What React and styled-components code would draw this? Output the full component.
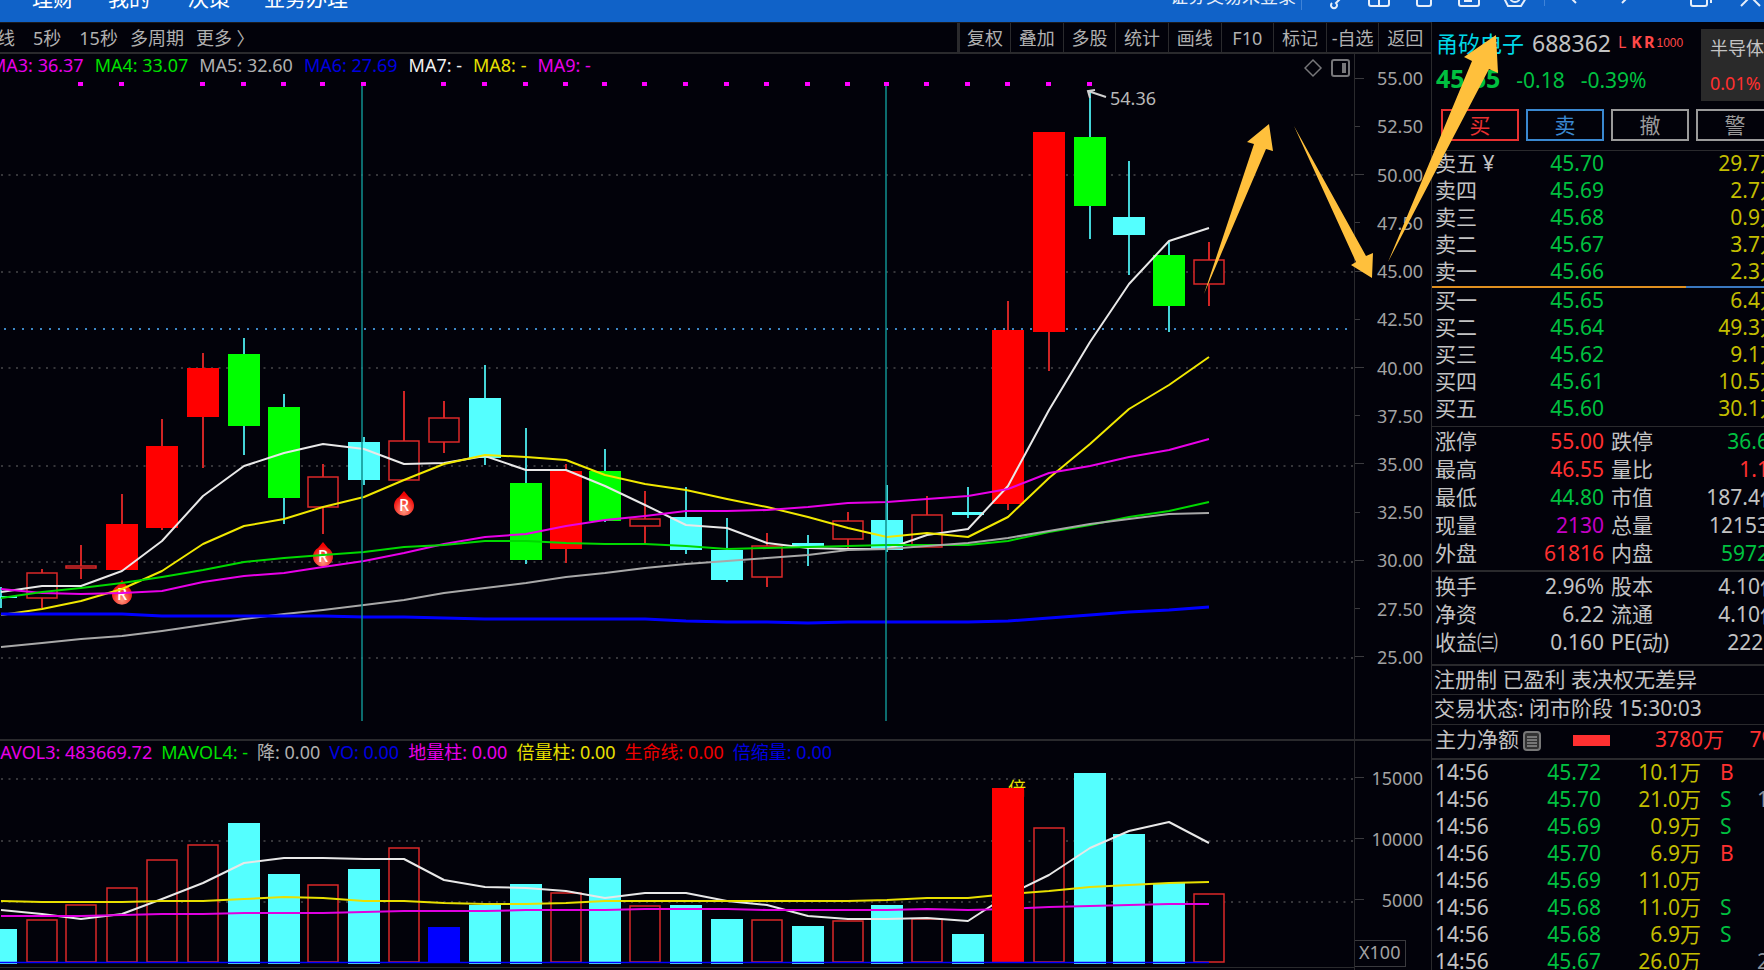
import React from "react";
import styled, { createGlobalStyle } from "styled-components";

const GlobalStyle = createGlobalStyle`
  * { box-sizing: border-box; }

  body {
    margin: 0;
    background: #02020a;
    overflow: hidden;
  }

  button {
    padding: 0;
    border: none;
    background: none;
    font: inherit;
    color: inherit;
    cursor: pointer;
  }
`;

const colors = {
  line: "#2a2a2d",
  text: "#c3c3c3",
  axis: "#a3a3a3",
  red: "#ff3030",
  green: "#00c040",
  yellow: "#c3bd00",
  purple: "#c400c4",
  muted: "#8a8f98",
};

const Page = styled.div`
  position: relative;
  display: flex;
  flex-direction: column;
  height: 100vh;
  overflow: hidden;
  color: ${colors.text};
  font-family: "Noto Sans", "Noto Sans CJK SC", sans-serif;
  font-size: 18px;
  line-height: 24px;
`;

/* Title bar */

const TitleBar = styled.header`
  display: flex;
  align-items: flex-end;
  justify-content: space-between;
  flex: none;
  height: 22px;
  padding: 0 2px 12px 32px;
  background: #1062c8;
  color: #fff;
`;

const Menu = styled.nav`
  display: flex;
  gap: 34px;
  font-size: 21px;
`;

const MenuLink = styled.a`
  color: inherit;
  text-decoration: none;
  white-space: nowrap;
  margin-right: ${(p) => (p.$wide ? "4px" : "0")};
`;

const Tools = styled.div`
  display: flex;
  align-items: flex-end;
  color: #e6eefa;
`;

const Login = styled.button`
  width: 132px;
  height: 28px;
  line-height: 28px;
  text-align: left;
  border-right: 1px solid #3f83d8;
`;

const ToolIcons = styled.svg`
  flex: none;
  width: 460px;
  height: 24px;
  fill: none;
  stroke: currentColor;
  stroke-width: 2;
`;

/* Main area */

const Body = styled.div`
  display: flex;
  flex: 1;
  min-height: 0;
`;

const Main = styled.main`
  display: flex;
  flex-direction: column;
  flex: 1;
  min-width: 0;
`;

const Toolbar = styled.div`
  display: flex;
  justify-content: space-between;
  flex: none;
  height: 32px;
  border-top: 1px solid #1b1b1e;
  border-bottom: 2px solid ${colors.line};
  color: #b0b0b0;
`;

const Periods = styled.div`
  display: flex;
  align-items: center;
  gap: 18px;
  margin-left: -3px;
`;

const PeriodGroup = styled.div`
  display: flex;
  gap: 12px;
`;

const Actions = styled.div`
  display: grid;
  grid-template-columns: 50px repeat(8, 1fr);
  width: 474px;
  border-left: 3px solid ${colors.line};
`;

const Action = styled.button`
  white-space: nowrap;

  & + & {
    border-left: 1px solid ${colors.line};
  }
`;

const Pane = styled.section`
  display: flex;
  flex: ${(p) => (p.$grow ? "1" : "none")};
  height: ${(p) => (p.$grow ? "auto" : "231px")};
  min-height: 0;
  border-top: ${(p) => (p.$grow ? "none" : `2px solid ${colors.line}`)};
`;

const Plot = styled.div`
  display: flex;
  flex-direction: column;
  flex: 1;
  min-width: 0;
`;

const Legend = styled.div`
  display: flex;
  flex: none;
  gap: ${(p) => p.$gap}px;
  height: 24px;
  margin-left: ${(p) => p.$shift}px;
  line-height: 22px;
  white-space: nowrap;
`;

const LegendItem = styled.span`
  color: ${(p) => p.$color};
`;

const LegendTools = styled.div`
  display: flex;
  gap: 6px;
  margin: 4px 4px 0 auto;
`;

const ToolIcon = styled.svg`
  width: 20px;
  height: 20px;
  fill: none;
  stroke: #77777a;
  stroke-width: 2;
`;

const Chart = styled.svg`
  display: block;
  flex: 1;
  width: 100%;
  min-height: 0;
`;

const Axis = styled.div`
  display: flex;
  flex-direction: column;
  flex: none;
  width: 77px;
  padding-top: ${(p) => p.$top || 0}px;
  padding-bottom: ${(p) => p.$bottom || 0}px;
  border-left: 1px solid ${colors.line};
  color: ${colors.axis};
`;

const AxisLabel = styled.div`
  display: flex;
  align-items: center;
  justify-content: space-between;
  flex: ${(p) => (p.$height ? "none" : "1")};
  height: ${(p) => (p.$height ? `${p.$height}px` : "auto")};
  padding-right: 8px;

  &::before {
    content: "";
    width: ${(p) => (p.$minor ? 5 : 9)}px;
    height: 1px;
    background: #3a3a3e;
  }
`;

const Unit = styled.div`
  width: 51px;
  height: 27px;
  margin-top: auto;
  padding-left: 4px;
  border: 1px solid #3a3a3e;
  border-left: none;
  line-height: 22px;
`;

/* Quote panel */

const Side = styled.aside`
  flex: none;
  width: 333px;
  overflow: hidden;
  border-left: 1px solid ${colors.line};
  font-size: 21px;
  line-height: 27px;
`;

const SideInner = styled.div`
  width: 360px;
`;

const Quote = styled.div`
  display: flex;
  justify-content: space-between;
  height: 87px;
  padding: 7px 0 0 4px;
`;

const NameRow = styled.div`
  display: flex;
  align-items: center;
  height: 28px;
  margin-bottom: 8px;
`;

const Name = styled.span`
  margin-right: 8px;
  color: #00d8e8;
  font-size: 22px;
`;

const Code = styled.span`
  margin-right: 7px;
  font-size: 23px;
`;

const Flag = styled.span`
  color: #ff4848;
  font-size: 16px;
  line-height: 20px;
  font-weight: ${(p) => (p.$bold ? 700 : 400)};
  margin: 0 ${(p) => (p.$bold ? 2 : 5)}px 2px 0;
`;

const Index = styled.span`
  color: #ff4848;
  font-family: "Liberation Sans", sans-serif;
  font-size: 12px;
  line-height: 20px;
`;

const PriceRow = styled.div`
  display: flex;
  align-items: baseline;
  gap: 16px;
  color: ${colors.green};
`;

const Price = styled.strong`
  font-size: 25px;
`;

const Industry = styled.div`
  width: 91px;
  height: 72px;
  padding: 7px 9px;
  background: #2a2a2a;
  font-size: 18px;
  line-height: 24px;
`;

const IndustryChange = styled.div`
  margin-top: 11px;
  color: ${colors.red};
`;

const Orders = styled.div`
  display: grid;
  grid-template-columns: repeat(4, 78px);
  gap: 7px;
  height: 42px;
  padding: 0 0 9px 9px;
  border-bottom: 1px solid ${colors.line};
`;

const OrderButton = styled.button`
  border: 2px solid ${(p) => p.$color};
  color: ${(p) => p.$color};
  line-height: 28px;
`;

const Sheet = styled.table`
  width: 346px;
  margin-left: 3px;
  table-layout: fixed;
  border-collapse: collapse;
  white-space: nowrap;
  line-height: 22px;
`;

const Cell = styled.td`
  width: ${(p) => p.$width}px;
  height: ${(p) => p.$height || 27}px;
  padding: 0 0 ${(p) => p.$lift || 0}px ${(p) => p.$indent || 0}px;
  text-align: ${(p) => (p.$left ? "left" : "right")};
  color: ${(p) => p.$color || "inherit"};
  font-weight: 400;
`;

const Spread = styled.div`
  display: flex;
  height: 2px;
  background: #3a78c0;

  &::before {
    content: "";
    width: 254px;
    background: #e09020;
  }
`;

const Block = styled.div`
  padding-bottom: ${(p) => p.$pad || 0}px;
  border-bottom: ${(p) => p.$border || 1}px solid ${colors.line};
`;

const Note = styled.div`
  height: ${(p) => p.$height}px;
  padding-left: 2px;
  border-bottom: 1px solid ${colors.line};
  line-height: 26px;
  white-space: nowrap;
`;

const Flow = styled.div`
  display: flex;
  height: 35px;
  padding: 1px 10px 0 3px;
  border-bottom: 2px solid ${colors.line};
  white-space: nowrap;
`;

const FlowBar = styled.div`
  width: 37px;
  height: 11px;
  margin: 9px 0 0 32px;
  background: ${colors.red};
`;

const FlowValue = styled.span`
  width: ${(p) => p.$width}px;
  color: ${colors.red};
  text-align: right;
`;

const NoteIcon = styled.svg`
  width: 18px;
  height: 20px;
  margin: 5px 0 0 4px;
`;

const Annotations = styled.svg`
  position: absolute;
  top: 0;
  right: 0;
  width: 600px;
  height: 320px;
  pointer-events: none;
  fill: #ffc03c;
`;

/* Data */

const UP = "up";
const LIMIT = "limit";
const DOWN = "down";
const DROP = "drop";

// x centre, kind, body top, body bottom, wick top, wick bottom, volume top, volume kind
const candles = [
  [1, DOWN, 596, 598, 587, 608, 929, DOWN],
  [42, UP, 572, 598, 569, 608, 919, UP],
  [81, UP, 565, 568, 545, 579, 904, UP],
  [122, LIMIT, 524, 570, 494, 570, 887, UP],
  [162, LIMIT, 446, 528, 419, 530, 859, UP],
  [203, LIMIT, 368, 417, 353, 468, 844, UP],
  [244, DROP, 354, 426, 338, 455, 823, DOWN],
  [284, DROP, 407, 498, 394, 524, 874, DOWN],
  [323, UP, 476, 507, 464, 534, 884, UP],
  [364, DOWN, 442, 480, 437, 485, 869, DOWN],
  [404, UP, 440, 480, 391, 480, 847, UP],
  [444, UP, 417, 442, 401, 453, 927, "shrink"],
  [485, DOWN, 398, 458, 365, 465, 905, DOWN],
  [526, DROP, 483, 560, 428, 564, 884, DOWN],
  [566, LIMIT, 471, 549, 464, 563, 892, UP],
  [605, DROP, 471, 521, 449, 522, 878, DOWN],
  [645, UP, 518, 526, 491, 543, 905, UP],
  [686, DOWN, 517, 550, 487, 554, 905, DOWN],
  [727, DOWN, 550, 580, 518, 582, 919, DOWN],
  [767, UP, 545, 577, 533, 587, 919, UP],
  [808, DOWN, 543, 546, 535, 566, 926, DOWN],
  [848, UP, 520, 539, 512, 548, 920, UP],
  [887, DOWN, 520, 550, 485, 552, 905, DOWN],
  [927, UP, 514, 547, 496, 547, 918, UP],
  [968, DOWN, 512, 515, 487, 518, 934, DOWN],
  [1008, LIMIT, 330, 504, 301, 510, 788, LIMIT],
  [1049, LIMIT, 132, 332, 132, 371, 827, UP],
  [1090, DROP, 137, 206, 91, 239, 773, DOWN],
  [1129, DOWN, 217, 235, 161, 275, 834, DOWN],
  [1169, DROP, 255, 306, 242, 332, 883, DOWN],
  [1209, UP, 259, 284, 242, 306, 893, UP],
];

const fills = {
  up: "#02020a",
  limit: "#ff0000",
  down: "#54ffff",
  drop: "#00ff00",
  shrink: "#0000ff",
};

const priceLines = [
  { color: "#e8e8e8", ys: [592, 586, 586, 571, 541, 496, 466, 453, 444, 449, 464, 463, 456, 470, 470, 486, 505, 525, 528, 543, 548, 549, 549, 535, 529, 486, 410, 342, 284, 241, 228] },
  { color: "#f0e800", ys: [615, 609, 601, 589, 571, 544, 526, 519, 507, 497, 480, 464, 455, 457, 460, 475, 484, 490, 499, 507, 517, 528, 537, 533, 537, 517, 478, 444, 409, 385, 357] },
  { color: "#e800e8", ys: [589, 593, 594, 593, 591, 582, 576, 573, 567, 561, 553, 544, 537, 534, 526, 520, 516, 511, 511, 510, 507, 503, 502, 499, 496, 489, 473, 466, 457, 450, 439] },
  { color: "#00d800", ys: [598, 592, 588, 583, 577, 570, 562, 558, 555, 552, 547, 545, 541, 541, 543, 544, 544, 546, 549, 548, 547, 546, 545, 545, 545, 541, 532, 525, 517, 511, 502] },
  { color: "#a8a8a8", ys: [647, 643, 639, 636, 631, 625, 619, 614, 610, 605, 600, 593, 588, 583, 577, 573, 568, 564, 561, 558, 555, 550, 549, 546, 543, 538, 531, 524, 519, 514, 513] },
  { color: "#0000ff", width: 3, ys: [614, 614, 614, 614, 616, 616, 616, 616, 616, 617, 617, 618, 619, 619, 619, 619, 619, 621, 622, 622, 623, 622, 622, 622, 622, 621, 618, 615, 612, 610, 607] },
];

const volumeLines = [
  { color: "#e8e8e8", ys: [910, 914, 919, 914, 899, 883, 863, 858, 858, 859, 859, 880, 887, 888, 891, 898, 893, 893, 901, 905, 916, 919, 919, 918, 921, 895, 875, 848, 831, 822, 843] },
  { color: "#e8e000", ys: [901, 902, 902, 902, 901, 901, 899, 897, 898, 901, 901, 903, 904, 904, 903, 901, 901, 901, 901, 901, 901, 901, 900, 898, 898, 894, 891, 887, 885, 883, 882] },
  { color: "#e000e0", ys: [916, 916, 916, 915, 914, 914, 913, 913, 913, 912, 911, 911, 911, 910, 910, 910, 909, 909, 909, 910, 910, 910, 910, 909, 910, 909, 907, 906, 905, 904, 904] },
];

const markers = [[122, 580], [323, 542], [404, 491]];

const maLegend = [
  ["MA3: 36.37", "#e800e8"],
  ["MA4: 33.07", "#00e000"],
  ["MA5: 32.60", "#b0b0b0"],
  ["MA6: 27.69", "#0000e0"],
  ["MA7: -", "#f0f0f0"],
  ["MA8: -", "#e8e000"],
  ["MA9: -", "#e800e8"],
];

const volumeLegend = [
  ["MAVOL3: 483669.72", "#e800e8"],
  ["MAVOL4: -", "#00e000"],
  ["降: 0.00", "#b0b0b0"],
  ["VO: 0.00", "#0000e0"],
  ["地量柱: 0.00", "#e800e8"],
  ["倍量柱: 0.00", "#e8e000"],
  ["生命线: 0.00", "#f00000"],
  ["倍缩量: 0.00", "#0000e0"],
];

const prices = ["55.00", "52.50", "50.00", "47.50", "45.00", "42.50", "40.00", "37.50", "35.00", "32.50", "30.00", "27.50", "25.00"];
const actions = ["复权", "叠加", "多股", "统计", "画线", "F10", "标记", "-自选", "返回"];

const asks = [
  ["卖五 ¥", "45.70", "29.7万"],
  ["卖四", "45.69", "2.7万"],
  ["卖三", "45.68", "0.9万"],
  ["卖二", "45.67", "3.7万"],
  ["卖一", "45.66", "2.3万"],
];

const bids = [
  ["买一", "45.65", "6.4万"],
  ["买二", "45.64", "49.3万"],
  ["买三", "45.62", "9.1万"],
  ["买四", "45.61", "10.5万"],
  ["买五", "45.60", "30.1万"],
];

const stats = [
  ["涨停", "55.00", colors.red, "跌停", "36.66", colors.green],
  ["最高", "46.55", colors.red, "量比", "1.15", colors.red],
  ["最低", "44.80", colors.green, "市值", "187.4亿", colors.text],
  ["现量", "2130", colors.purple, "总量", "121538", colors.text],
  ["外盘", "61816", colors.red, "内盘", "59722", colors.green],
];

const fundamentals = [
  ["换手", "2.96%", colors.text, "股本", "4.10亿", colors.text],
  ["净资", "6.22", colors.text, "流通", "4.10亿", colors.text],
  ["收益㈢", "0.160", colors.text, "PE(动)", "222.8", colors.text],
];

const ticks = [
  ["45.72", "10.1万", "B", ""],
  ["45.70", "21.0万", "S", "13"],
  ["45.69", "0.9万", "S", ""],
  ["45.70", "6.9万", "B", ""],
  ["45.69", "11.0万", "", ""],
  ["45.68", "11.0万", "S", ""],
  ["45.68", "6.9万", "S", ""],
  ["45.67", "26.0万", "", "22"],
];

/* Charts */

const Lines = ({ series }) =>
  series.map(({ color, width = 2, ys }) => (
    <polyline
      key={color}
      points={ys.map((y, i) => `${candles[i][0]},${y}`).join(" ")}
      fill="none"
      stroke={color}
      strokeWidth={width}
      strokeLinejoin="round"
    />
  ));

const GridLines = ({ ys }) =>
  ys.map((y) => (
    <line key={y} x1="1" x2="1354" y1={y} y2={y} stroke="#36363a" strokeWidth="2" strokeDasharray="2 5.5" />
  ));

const Box = ({ x, top, bottom, kind }) =>
  kind === UP ? (
    <rect x={x - 15} y={top + 1} width="30" height={Math.max(bottom - top - 1, 2)} fill={fills.up} stroke="#dc2828" strokeWidth="1.5" />
  ) : (
    <rect x={x - 16} y={top} width="32" height={bottom - top} fill={fills[kind]} shapeRendering="crispEdges" />
  );

const Candle = ({ data: [x, kind, top, bottom, high, low] }) => (
  <g>
    <line x1={x} x2={x} y1={high} y2={low} stroke={kind === UP || kind === LIMIT ? "#d02424" : "#44d4d8"} strokeWidth="2" />
    <Box x={x} top={top} bottom={bottom} kind={kind} />
  </g>
);

const Marker = ({ x, y }) => (
  <g transform={`translate(${x} ${y})`}>
    <path d="M0 0 L5 6 A10 10 0 1 1 -5 6 Z" fill="url(#drop)" />
    <text x="0" y="20" fill="#fff" fontSize="16" fontWeight="500" textAnchor="middle">R</text>
  </g>
);

const PriceChart = () => (
  <Chart viewBox="0 78 1354 661" preserveAspectRatio="xMaxYMin slice">
    <defs>
      <radialGradient id="drop" cx="50%" cy="80%" r="65%">
        <stop offset="0" stopColor="#ff9a80" />
        <stop offset="1" stopColor="#f00000" />
      </radialGradient>
    </defs>
    <GridLines ys={[175, 272, 368, 466, 562, 658]} />
    <line x1="4" x2="1348" y1="329" y2="329" stroke="#3c86c4" strokeWidth="2" strokeDasharray="2 7" />
    {candles.map(([x], i) =>
      i > 1 && i < 28 && ![4, 10].includes(i) ? (
        <rect key={x} x={x - 3} y="82" width="5" height="4" fill="#ff00ff" />
      ) : null
    )}
    {candles.map((data) => (
      <Candle key={data[0]} data={data} />
    ))}
    {markers.map(([x, y]) => (
      <Marker key={x} x={x} y={y} />
    ))}
    <Lines series={priceLines} />
    <path d="M362 86V721M886 86V721" stroke="#109090" strokeWidth="1.5" />
    <path d="M1106 97L1088 91M1095 90L1088 91L1090 98" fill="none" stroke="#d0d0d0" strokeWidth="2" />
    <text x="1110" y="105" fill="#b8b8b8" fontSize="18">54.36</text>
  </Chart>
);

const VolumeChart = () => (
  <Chart viewBox="0 765 1354 205" preserveAspectRatio="xMaxYMin slice">
    <GridLines ys={[779, 841, 902]} />
    {candles.map(([x, , , , , , top, kind]) =>
      kind === LIMIT ? null : (
        <Box key={x} x={x} top={top} bottom={kind === DOWN ? 964 : 962} kind={kind} />
      )
    )}
    <Lines series={volumeLines} />
    <text x="1008" y="795" fill="#e8e000" fontSize="18">倍</text>
    <Box x={1008} top={788} bottom={962} kind={LIMIT} />
    <path d="M0 962.5H1209" stroke="#0000ff" strokeWidth="1.5" />
    <path d="M0 967.5H1354" stroke={colors.line} />
  </Chart>
);

/* Quote panel parts */

const Book = ({ rows }) => (
  <Sheet>
    <tbody>
      {rows.map(([label, price, amount]) => (
        <tr key={label}>
          <Cell as="th" $width={88} $lift={4} $left>{label}</Cell>
          <Cell $width={81} $lift={4} $color={colors.green}>{price}</Cell>
          <Cell $width={177} $lift={4} $color={colors.yellow}>{amount}</Cell>
        </tr>
      ))}
    </tbody>
  </Sheet>
);

const Stats = ({ rows }) => (
  <Sheet>
    <tbody>
      {rows.map(([a, av, ac, b, bv, bc]) => (
        <tr key={a}>
          <Cell as="th" $width={88} $height={28} $left>{a}</Cell>
          <Cell $width={81} $color={ac}>{av}</Cell>
          <Cell as="th" $width={85} $indent={7} $left>{b}</Cell>
          <Cell $width={92} $color={bc}>{bv}</Cell>
        </tr>
      ))}
    </tbody>
  </Sheet>
);

const Ticks = () => (
  <Sheet>
    <tbody>
      {ticks.map(([price, amount, side, count], i) => (
        <tr key={i}>
          <Cell $width={85} $lift={3} $left>14:56</Cell>
          <Cell $width={81} $lift={3} $color={colors.green}>{price}</Cell>
          <Cell $width={100} $lift={3} $color={colors.yellow}>{amount}</Cell>
          <Cell $width={46} $lift={3} $indent={19} $left $color={side === "B" ? colors.red : colors.green}>{side}</Cell>
          <Cell $width={34} $lift={3} $color={colors.muted}>{count}</Cell>
        </tr>
      ))}
    </tbody>
  </Sheet>
);

const App = () => (
  <Page>
    <GlobalStyle />
    <TitleBar>
      <Menu>
        <MenuLink href="#">理财</MenuLink>
        <MenuLink href="#" $wide>我的</MenuLink>
        <MenuLink href="#">决策</MenuLink>
        <MenuLink href="#">业务办理</MenuLink>
      </Menu>
      <Tools>
        <Login>证券交易未登录</Login>
        <ToolIcons viewBox="0 0 460 24">
          <path d="M30 17a3 3 0 1 0 4 0l8-8" />
          <rect x="67" y="0" width="20" height="20" rx="2" />
          <path d="M77 0V20M67 12H87" />
          <rect x="115" y="0" width="14" height="20" rx="2" />
          <rect x="157" y="0" width="20" height="20" rx="2" />
          <path d="M162 15H170" />
          <path d="M206 20L202 12L207 3H219L224 12L219 20Z" />
          <circle cx="213" cy="11" r="5" />
          <path d="M242.500 0V20" stroke="#3f83d8" strokeWidth="1" />
          <path d="M274 17L266 9L274 1M320 17L328 9L320 1" />
          <path d="M409 17V4M389 7V18Q389 20 391 20H403Q405 20 405 18V3" />
          <path d="M439 20L458 1M439 1L458 20" />
        </ToolIcons>
      </Tools>
    </TitleBar>
    <Body>
      <Main>
        <Toolbar>
          <Periods>
            <button>线</button>
            <button>5秒</button>
            <PeriodGroup>
              <button>15秒</button>
              <button>多周期</button>
              <button>更多 〉</button>
            </PeriodGroup>
          </Periods>
          <Actions>
            {actions.map((name) => (
              <Action key={name}>{name}</Action>
            ))}
          </Actions>
        </Toolbar>
        <Pane $grow>
          <Plot>
            <Legend $gap={11} $shift={-10}>
              {maLegend.map(([text, color]) => (
                <LegendItem key={text} $color={color}>{text}</LegendItem>
              ))}
              <LegendTools>
                <ToolIcon viewBox="0 0 20 20">
                  <path d="M9 2L17 10L9 18L1 10Z" strokeWidth="1.5" />
                </ToolIcon>
                <ToolIcon viewBox="0 0 20 20">
                  <rect x="2" y="2" width="17" height="16" rx="2" />
                  <rect x="12" y="5" width="4" height="10" fill="#77777a" stroke="none" />
                </ToolIcon>
              </LegendTools>
            </Legend>
            <PriceChart />
          </Plot>
          <Axis $bottom={58}>
            {prices.map((price, i) => (
              <AxisLabel key={price} $minor={i % 2 === 1}>{price}</AxisLabel>
            ))}
          </Axis>
        </Pane>
        <Pane>
          <Plot>
            <Legend $gap={9} $shift={-16}>
              {volumeLegend.map(([text, color]) => (
                <LegendItem key={text} $color={color}>{text}</LegendItem>
              ))}
            </Legend>
            <VolumeChart />
          </Plot>
          <Axis $top={6} $bottom={3}>
            <AxisLabel $height={61}>15000</AxisLabel>
            <AxisLabel $height={61}>10000</AxisLabel>
            <AxisLabel $height={61}>5000</AxisLabel>
            <Unit>X100</Unit>
          </Axis>
        </Pane>
      </Main>
      <Side>
        <SideInner>
          <Quote>
            <div>
              <NameRow>
                <Name>甬矽电子</Name>
                <Code>688362</Code>
                <Flag>L</Flag>
                <Flag $bold>K</Flag>
                <Flag $bold>R</Flag>
                <Index>1000</Index>
              </NameRow>
              <PriceRow>
                <Price>45.65</Price>
                <span>-0.18</span>
                <span>-0.39%</span>
              </PriceRow>
            </div>
            <Industry>
              半导体
              <IndustryChange>0.01%</IndustryChange>
            </Industry>
          </Quote>
          <Orders>
            <OrderButton $color="#e83030">买</OrderButton>
            <OrderButton $color="#3a88d0">卖</OrderButton>
            <OrderButton $color="#9a9a9a">撤</OrderButton>
            <OrderButton $color="#9a9a9a">警</OrderButton>
          </Orders>
          <Book rows={asks} />
          <Spread />
          <Block $pad={3}>
            <Book rows={bids} />
          </Block>
          <Block $pad={3} $border={2}>
            <Stats rows={stats} />
          </Block>
          <Block $pad={8} $border={2}>
            <Stats rows={fundamentals} />
          </Block>
          <Note $height={29}>注册制 已盈利 表决权无差异</Note>
          <Note $height={30}>交易状态: 闭市阶段 15:30:03</Note>
          <Flow>
            主力净额
            <NoteIcon viewBox="0 0 18 20">
              <rect x="1" y="1" width="16" height="18" rx="3" fill="#333" stroke="#777" strokeWidth="2" />
              <path d="M4 6H14M4 9H14M4 12H14M4 15H14" stroke="#bbb" />
            </NoteIcon>
            <FlowBar />
            <FlowValue $width={114}>3780万</FlowValue>
            <FlowValue $width={55}>7%</FlowValue>
          </Flow>
          <Ticks />
        </SideInner>
      </Side>
    </Body>
    <Annotations viewBox="1164 0 600 320">
      <path d="M1204 294L1254 144L1247 142L1269 124L1273 151L1266 149Z" />
      <path d="M1294 126L1366 256L1373 253L1372 278L1351 265L1356 262Z" />
      <path d="M1388 262L1472 61L1464 57L1496 35L1498 73L1489 69Z" />
    </Annotations>
  </Page>
);

export default App;
